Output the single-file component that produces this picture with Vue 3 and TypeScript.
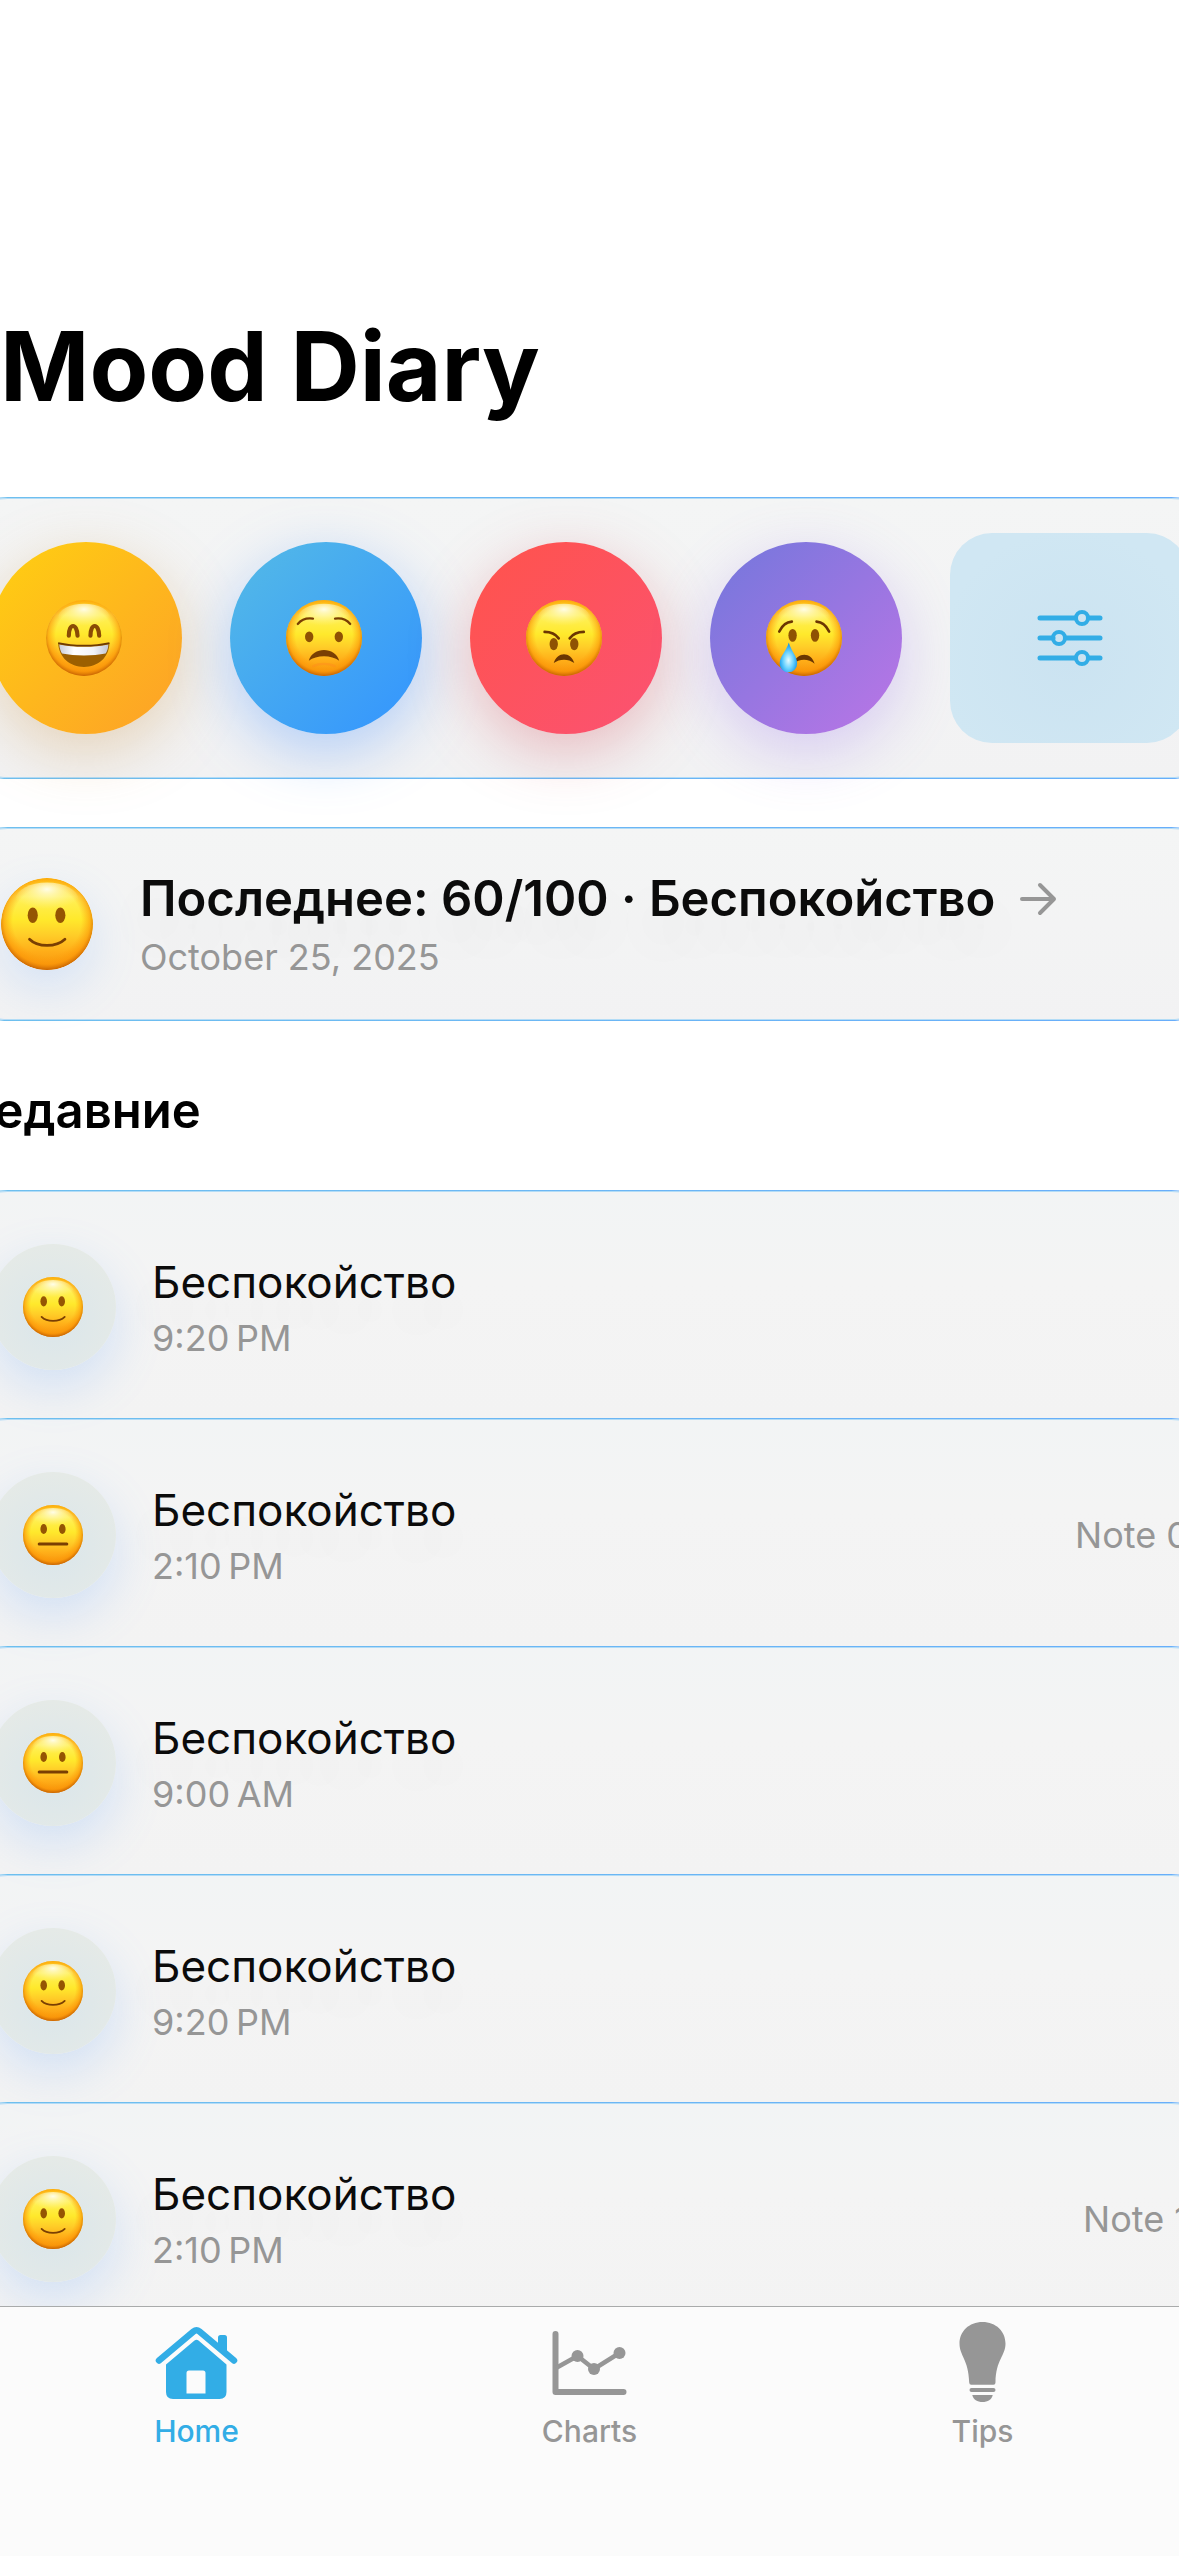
<script setup lang="ts">
import { ref } from 'vue'

type Face = 'grin' | 'worried' | 'angry' | 'cry' | 'smile' | 'neutral'

interface Mood {
  face: Face
  label: string
  tone: string
}

interface Entry {
  id: number
  face: Face
  name: string
  time: string
  note?: string
}

const moods: Mood[] = [
  { face: 'grin', label: 'Радость', tone: 'joy' },
  { face: 'worried', label: 'Беспокойство', tone: 'worry' },
  { face: 'angry', label: 'Злость', tone: 'anger' },
  { face: 'cry', label: 'Грусть', tone: 'sadness' },
]

const entries: Entry[] = [
  { id: 1, face: 'smile', name: 'Беспокойство', time: '9:20\u202fPM' },
  { id: 2, face: 'neutral', name: 'Беспокойство', time: '2:10\u202fPM', note: 'Note 0' },
  { id: 3, face: 'neutral', name: 'Беспокойство', time: '9:00\u202fAM' },
  { id: 4, face: 'smile', name: 'Беспокойство', time: '9:20\u202fPM' },
  { id: 5, face: 'smile', name: 'Беспокойство', time: '2:10\u202fPM', note: 'Note 1' },
]

const activeTab = ref('home')
</script>

<template>
  <div class="app">
    <svg class="defs" width="0" height="0" aria-hidden="true">
      <defs>
        <linearGradient id="skin" x1="0" y1="0" x2="0" y2="1">
          <stop offset="0" stop-color="#ffcb14" />
          <stop offset="0.2" stop-color="#fff05a" />
          <stop offset="0.45" stop-color="#ffe92c" />
          <stop offset="0.62" stop-color="#ffcd28" />
          <stop offset="0.8" stop-color="#ffad18" />
          <stop offset="1" stop-color="#f5930c" />
        </linearGradient>
        <radialGradient id="rim" cx="0.5" cy="0.47" r="0.53">
          <stop offset="0.7" stop-color="#ff9d0a" stop-opacity="0" />
          <stop offset="0.88" stop-color="#fb9406" stop-opacity="0.6" />
          <stop offset="1" stop-color="#c66303" stop-opacity="1" />
        </radialGradient>
        <radialGradient id="shine" cx="0.5" cy="0.2" r="0.6">
          <stop offset="0" stop-color="#fffff0" stop-opacity="0.95" />
          <stop offset="1" stop-color="#fff59a" stop-opacity="0" />
        </radialGradient>
        <linearGradient id="teeth" x1="0" y1="0" x2="1" y2="0">
          <stop offset="0" stop-color="#c9ccd6" />
          <stop offset="0.3" stop-color="#ffffff" />
          <stop offset="0.7" stop-color="#f2f3f8" />
          <stop offset="1" stop-color="#c3c6d2" />
        </linearGradient>
        <radialGradient id="tear" cx="0.5" cy="0.6" r="0.55">
          <stop offset="0" stop-color="#e4fbff" />
          <stop offset="0.5" stop-color="#6fd4ff" />
          <stop offset="1" stop-color="#0f97ee" />
        </radialGradient>
        <g id="head">
          <circle cx="50" cy="50" r="50" fill="url(#skin)" />
          <circle cx="50" cy="50" r="50" fill="url(#rim)" />
          <ellipse cx="50" cy="23" rx="34" ry="18" fill="url(#shine)" />
        </g>
      </defs>
      <symbol id="face-grin" viewBox="0 0 100 100">
        <use href="#head" />
        <g fill="none" stroke="#8a4b05" stroke-width="5.5" stroke-linecap="round">
          <path d="M30 47C30 30 41 30 41.500 47" />
          <path d="M58.500 47C58.500 30 69.500 30 70 47" />
        </g>
        <path d="M16 56.500C36 61 64 61 83.500 56.500C83 76 68 88 50 88C32 88 17 76 16 56.500Z" fill="#9c5f00" />
        <path d="M17.500 58.500C36 62.500 64 62.500 82 58.500C82 64 80 68 78.500 70.500C62 74 38 74 21 70.500C19 67 17.700 63 17.500 58.500Z" fill="url(#teeth)" />
        <path d="M16 56.500C36 61 64 61 83.500 56.500" fill="none" stroke="#6d3900" stroke-width="2" />
      </symbol>
      <symbol id="face-worried" viewBox="0 0 100 100">
        <use href="#head" />
        <g fill="none" stroke="#7a3f03" stroke-width="3" stroke-linecap="round">
          <path d="M15.500 31.500C20 26 28 23.500 35.500 24.500" />
          <path d="M64.500 24.500C72 23.500 80 26 84.500 31.500" />
        </g>
        <ellipse cx="30.500" cy="48.500" rx="5.500" ry="7" fill="#8f5203" />
        <ellipse cx="69.500" cy="48.500" rx="5.500" ry="7" fill="#8f5203" />
        <path d="M30 80C35 61 65 61 70 80C60 72 40 72 30 80Z" fill="#7a3f03" />
        <path d="M36 87C44 83 56 83 64 87" fill="none" stroke="#ff8d1c" stroke-opacity="0.5" stroke-width="3" stroke-linecap="round" />
      </symbol>
      <symbol id="face-angry" viewBox="0 0 100 100">
        <use href="#head" />
        <ellipse cx="36.500" cy="58" rx="5.500" ry="8" fill="#8f5203" />
        <ellipse cx="63.500" cy="58" rx="5.500" ry="8" fill="#8f5203" />
        <g fill="none" stroke="#6b3602" stroke-width="3.500" stroke-linecap="round">
          <path d="M24.500 42C32 42 39 45 43 50.500" />
          <path d="M57.500 50.500C61.500 45 68.500 42 76 42" />
        </g>
        <path d="M36.500 83C41 67.500 59 67.500 63.500 83C56 77 44 77 36.500 83Z" fill="#6b3602" />
      </symbol>
      <symbol id="face-cry" viewBox="0 0 100 100">
        <use href="#head" />
        <g fill="none" stroke="#6b3602" stroke-width="3.500" stroke-linecap="round">
          <path d="M17.500 41.500C21 34 27 29 34 28.500" />
          <path d="M66.500 28.500C73 29 79.500 34 83 41.500" />
        </g>
        <ellipse cx="35" cy="46.500" rx="5.500" ry="8.500" fill="#8f5203" />
        <ellipse cx="64.500" cy="46.500" rx="5.500" ry="8.500" fill="#8f5203" />
        <path d="M36 84C41 68 60 68 64 84C56 77 44 77 36 84Z" fill="#6b3602" />
        <path d="M30 56C33 67 41 74 41 83.500A11.500 11.500 0 0 1 18 83.500C18 74 27 67 30 56Z" fill="url(#tear)" />
      </symbol>
      <symbol id="face-smile" viewBox="0 0 100 100">
        <use href="#head" />
        <ellipse cx="34.500" cy="40.500" rx="5.500" ry="8.500" fill="#955503" />
        <ellipse cx="64.500" cy="40.500" rx="5.500" ry="8.500" fill="#955503" />
        <path d="M31 66.500C40 75.500 60 75.500 69.500 66.500" fill="none" stroke="#7a3f03" stroke-width="3" stroke-linecap="round" />
      </symbol>
      <symbol id="face-neutral" viewBox="0 0 100 100">
        <use href="#head" />
        <ellipse cx="34.500" cy="40" rx="5.500" ry="8.500" fill="#955503" />
        <ellipse cx="65.500" cy="40" rx="5.500" ry="8.500" fill="#955503" />
        <path d="M27 65H73" stroke="#7a3f03" stroke-width="5" stroke-linecap="round" />
      </symbol>
    </svg>

    <main class="content">
      <h1 class="title">Mood Diary</h1>

      <section class="card moods">
        <button
          v-for="mood in moods"
          :key="mood.face"
          type="button"
          class="mood"
          :class="mood.tone"
          :aria-label="mood.label"
        >
          <svg class="mood-face" aria-hidden="true"><use :href="`#face-${mood.face}`" /></svg>
        </button>
        <button type="button" class="settings" aria-label="Настроить">
          <svg width="66" height="60" viewBox="0 0 66 60" fill="none" stroke="currentColor" stroke-linecap="round" aria-hidden="true">
            <path d="M3 10H38M52 10H63M3 30H16M30 30H63M3 50H38M52 50H63" stroke-width="5" />
            <g stroke-width="4">
              <circle cx="45" cy="10" r="6" />
              <circle cx="22" cy="30" r="6" />
              <circle cx="45" cy="50" r="6" />
            </g>
          </svg>
        </button>
      </section>

      <a href="#latest" class="card latest">
        <span class="latest-slot">
          <svg class="latest-face" aria-hidden="true"><use href="#face-smile" /></svg>
        </span>
        <span class="texts">
          <span class="latest-line">
            <strong class="latest-title">Последнее: 60/100 · Беспокойство</strong>
            <svg width="38" height="34" viewBox="0 0 38 34" fill="none" stroke="#969696" stroke-width="4" stroke-linecap="round" stroke-linejoin="round" aria-hidden="true">
              <path d="M3 17H35M21 3L35 17L21 31" />
            </svg>
          </span>
          <span class="small">October 25, 2025</span>
        </span>
      </a>

      <h2 class="heading">Недавние</h2>

      <ul class="entries">
        <li v-for="entry in entries" :key="entry.id" class="entry">
          <span class="badge">
            <svg class="badge-face" aria-hidden="true"><use :href="`#face-${entry.face}`" /></svg>
          </span>
          <span class="texts">
            <span class="name">{{ entry.name }}</span>
            <span class="small">{{ entry.time }}</span>
          </span>
          <span v-if="entry.note" class="small note">{{ entry.note }}</span>
        </li>
      </ul>
    </main>

    <nav class="tabs">
      <a href="#home" class="tab" :class="{ active: activeTab === 'home' }" @click="activeTab = 'home'">
        <svg class="tab-icon" viewBox="0 0 84 84" aria-hidden="true">
          <path d="M4 38.500L38.500 9.500Q41.500 7 44.500 9.500L79 38.500" fill="none" stroke="currentColor" stroke-width="6.500" stroke-linecap="round" />
          <path d="M63 27V15.500Q63 13 65.500 13H69.500Q72 13 72 15.500V34Z" fill="currentColor" />
          <path fill-rule="evenodd" d="M39.500 18.500Q41.500 17 43.500 18.500L71.500 42.500V70Q71.500 77 64.500 77H18Q11 77 11 70V42.500ZM34 48.500Q31.500 48.500 31.500 51V71.500H50.500V51Q50.500 48.500 48 48.500Z" fill="currentColor" />
        </svg>
        <span>Home</span>
      </a>
      <a href="#charts" class="tab" :class="{ active: activeTab === 'charts' }" @click="activeTab = 'charts'">
        <svg class="tab-icon" viewBox="0 0 84 84" fill="none" stroke="currentColor" aria-hidden="true">
          <path d="M7.500 12V70H75.500" stroke-width="6" stroke-linecap="round" stroke-linejoin="round" />
          <path d="M8 46L29.500 34L46 47L71.500 31" stroke-width="4.500" />
          <g fill="currentColor" stroke="none">
            <circle cx="29.500" cy="34" r="6" />
            <circle cx="46" cy="47" r="6" />
            <circle cx="71.500" cy="31" r="6" />
          </g>
        </svg>
        <span>Charts</span>
      </a>
      <a href="#tips" class="tab" :class="{ active: activeTab === 'tips' }" @click="activeTab = 'tips'">
        <svg class="tab-icon" viewBox="0 0 84 84" fill="currentColor" aria-hidden="true">
          <path d="M41.500 0C55 0 64.500 9.500 64.500 21.500C64.500 34 55 37 54.500 60.500Q54.500 62.700 52.500 62.700H30.200Q28.300 62.700 28.200 60.500C27.500 37 18.500 34 18.500 21.500C18.500 9.500 28 0 41.500 0Z" />
          <rect x="28.500" y="66" width="26" height="4" rx="2" />
          <path d="M31.300 73H51.700C51 77.500 46.500 80 41.500 80C36.500 80 32 77.500 31.300 73Z" />
        </svg>
        <span>Tips</span>
      </a>
    </nav>
  </div>
</template>

<style>
body {
  margin: 0;
  background: #ffffff;
}
</style>

<style scoped>
.app {
  display: flex;
  flex-direction: column;
  height: 100vh;
  overflow: hidden;
  background: #ffffff;
  color: #0b0b0b;
  font-family: Inter, "Liberation Sans", sans-serif;
  white-space: nowrap;
}

.defs {
  position: absolute;
}

.content {
  flex: 1;
  min-height: 0;
  overflow: hidden;
}

.title {
  margin: 0;
  padding: 306px 0 71px;
  font-size: 96px;
  line-height: 120px;
  font-weight: 700;
  color: #000000;
}

.card {
  display: flex;
  align-items: center;
  box-sizing: border-box;
  margin: 0 -46px;
  padding: 35px;
  border: 1px solid transparent;
  border-radius: 54px;
  background:
    linear-gradient(#f4f5f5, #f2f2f3) padding-box,
    linear-gradient(90deg, #6fc0ee, #68adfb) border-box;
  box-shadow: inset 0 0 0 1px #b3dcf6;
}

.moods {
  gap: 48px;
  margin-bottom: 48px;
}

.mood {
  display: flex;
  align-items: center;
  justify-content: center;
  flex: none;
  width: 192px;
  height: 192px;
  padding: 0 4px 0 0;
  border: 0;
  border-radius: 50%;
}

.mood-face {
  width: 76px;
  height: 76px;
}

.joy {
  background: linear-gradient(135deg, #ffd011, #fda028);
  box-shadow: 0 18px 60px rgba(205, 150, 70, 0.34);
}

.worry {
  background: linear-gradient(135deg, #54bae6, #3394ff);
  box-shadow: 0 18px 60px rgba(80, 150, 255, 0.4);
}

.anger {
  background: linear-gradient(135deg, #ff534b, #fb5273);
  box-shadow: 0 18px 60px rgba(215, 80, 90, 0.34);
}

.sadness {
  background: linear-gradient(135deg, #7377dc, #bb75e6);
  box-shadow: 0 18px 60px rgba(150, 110, 240, 0.3);
}

.settings {
  display: flex;
  align-items: center;
  justify-content: center;
  flex: 1;
  height: 210px;
  padding: 0;
  border: 0;
  border-radius: 42px;
  background: radial-gradient(circle at 50% 60%, #cbe3f1, #d0e7f3 75%);
  color: #32ade6;
}

.latest {
  gap: 36px;
  height: 194px;
  color: inherit;
  text-decoration: none;
}

.latest-slot {
  display: flex;
  justify-content: center;
  width: 114px;
}

.latest-face {
  width: 92px;
  height: 92px;
  border-radius: 50%;
  box-shadow: 0 18px 48px rgba(90, 160, 255, 0.2);
}

.texts {
  display: flex;
  flex-direction: column;
  gap: 6px;
}

.latest-line {
  display: flex;
  align-items: center;
  gap: 24px;
}

.latest-title {
  font-size: 49px;
  line-height: 60px;
  font-weight: 600;
  text-shadow: 0 24px 48px rgba(0, 0, 0, 0.08);
}

.small {
  font-size: 36px;
  line-height: 44px;
  color: #969696;
}

.heading {
  margin: 60px -46px 49px;
  padding-left: 4px;
  font-size: 49px;
  line-height: 60px;
  font-weight: 600;
  color: #000000;
}

.entries {
  margin: 0 -46px;
  padding: 0;
  list-style: none;
}

.entry {
  display: flex;
  align-items: center;
  gap: 36px;
  padding: 53px 35px 48px;
  border: 1px solid transparent;
  border-bottom: 0;
  border-radius: 54px 54px 0 0;
  background:
    linear-gradient(#f2f4f5, #f4f4f4 40%, #f3f3f3) padding-box,
    linear-gradient(90deg, #6fc0ee, #68adfb) border-box;
  box-shadow: inset 0 1px 0 #b3dcf6;
}

.badge {
  display: flex;
  align-items: center;
  justify-content: center;
  width: 126px;
  height: 126px;
  border-radius: 50%;
  background: radial-gradient(circle at 50% 60%, #dde7ea 20%, #e5eae7 75%);
  box-shadow: 0 18px 48px rgba(90, 160, 255, 0.22);
}

.badge-face {
  width: 60px;
  height: 60px;
}

.name {
  font-size: 44px;
  line-height: 56px;
  text-shadow: 0 24px 48px rgba(0, 0, 0, 0.08);
}

.note {
  margin-left: auto;
}

.tabs {
  display: flex;
  box-sizing: border-box;
  height: 250px;
  padding-top: 15px;
  border-top: 1px solid #a9abab;
  background: #fbfbfb;
}

.tab {
  display: flex;
  flex-direction: column;
  align-items: center;
  gap: 6px;
  flex: 1;
  font-size: 30px;
  line-height: 38px;
  font-weight: 500;
  color: #969696;
  text-decoration: none;
}

.tab.active {
  color: #32ade6;
}

.tab-icon {
  width: 84px;
  height: 84px;
}
</style>
